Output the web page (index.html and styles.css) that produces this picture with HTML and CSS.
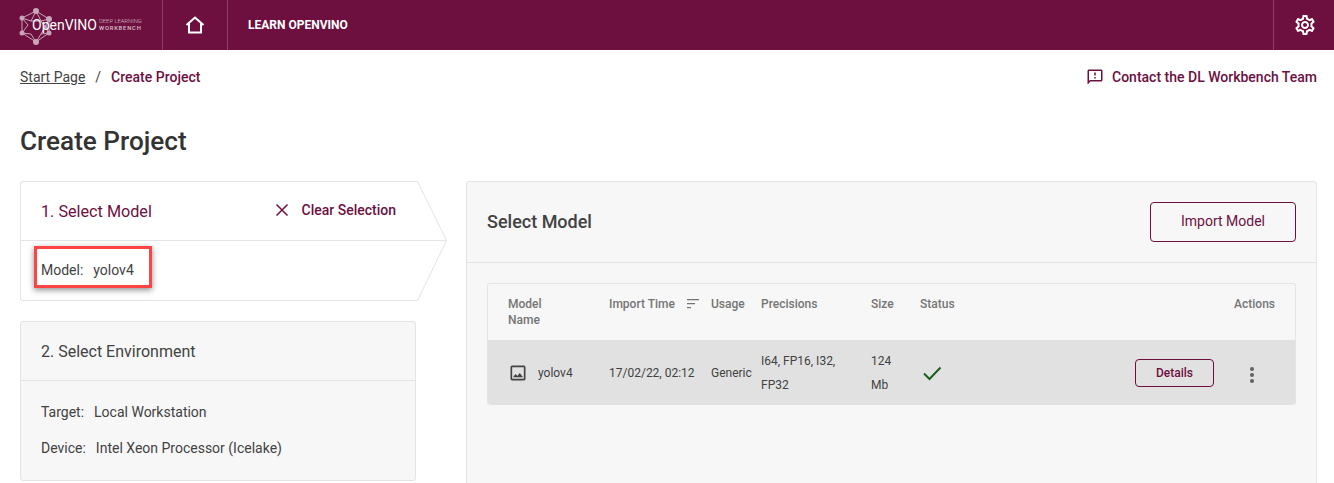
FILE: index.html
```html
<!DOCTYPE html>
<html lang="en">

<head>
    <meta charset="UTF-8">
    <meta name="viewport" content="width=device-width, initial-scale=1.0">
    <title>Create Project</title>
    <link rel="stylesheet" href="styles.css">
</head>

<body>
    <header class="topbar">
        <div class="logo">
            <svg class="logo-net" width="40" height="44" viewBox="0 0 40 44" fill="none" stroke="#c9a5b8" stroke-width="1">
                <path d="M17 9 L3 16 L3 31 L17 40 L30 31 L30 17 Z M3 16 L12 19 L17 9 L22 19 L30 17 M12 19 H22 M3 31 L9 23 L3 16 M17 40 L12 32 L3 31 M17 40 L22 32 L30 31 M22 19 L26 25 L22 32 M30 17 L26 25 L30 31" />
                <g fill="#c9a5b8" stroke="none">
                    <circle cx="17" cy="9" r="3" />
                    <circle cx="3" cy="16" r="2.5" />
                    <circle cx="30" cy="17" r="3" />
                    <circle cx="3" cy="31" r="2.5" />
                    <circle cx="30" cy="31" r="2.5" />
                    <circle cx="17" cy="40" r="3" />
                    <circle cx="26" cy="25" r="2" />
                </g>
            </svg>
            <span class="logo-name">OpenVINO</span>
            <span class="logo-sub">
                <span class="logo-sub-top">DEEP LEARNING</span>
                <span class="logo-sub-bottom">WORKBENCH</span>
            </span>
        </div>
        <a class="home-link">
            <svg width="20" height="18" viewBox="0 0 20 18" fill="none" stroke="#fff" stroke-width="2">
                <path d="M1.5 9 L10 1.5 L18.5 9 M4 7 V16.5 H16 V7" />
            </svg>
        </a>
        <a class="learn-link">LEARN OPENVINO</a>
        <a class="settings-link">
            <svg width="24" height="24" viewBox="0 0 24 24" fill="#fff">
                <path d="M19.43 12.98c.04-.32.07-.64.07-.98s-.03-.66-.07-.98l2.11-1.65c.19-.15.24-.42.12-.64l-2-3.46c-.12-.22-.39-.3-.61-.22l-2.49 1c-.52-.4-1.08-.73-1.69-.98l-.38-2.65C14.46 2.18 14.25 2 14 2h-4c-.25 0-.46.18-.49.42l-.38 2.65c-.61.25-1.17.59-1.69.98l-2.49-1c-.23-.09-.49 0-.61.22l-2 3.46c-.13.22-.07.49.12.64l2.11 1.65c-.04.32-.07.65-.07.98s.03.66.07.98l-2.11 1.65c-.19.15-.24.42-.12.64l2 3.46c.12.22.39.3.61.22l2.49-1c.52.4 1.08.73 1.69.98l.38 2.65c.03.24.24.42.49.42h4c.25 0 .46-.18.49-.42l.38-2.65c.61-.25 1.17-.59 1.69-.98l2.49 1c.23.09.49 0 .61-.22l2-3.46c.12-.22.07-.49-.12-.64l-2.11-1.65zM17.45 11.27c.04.31.05.52.05.73s-.02.43-.05.73l-.14 1.13.89.7 1.08.84-.7 1.21-1.27-.51-1.04-.42-.9.68c-.43.32-.84.56-1.25.73l-1.06.43-.16 1.13-.2 1.35h-1.4l-.19-1.35-.16-1.13-1.06-.43c-.43-.18-.83-.41-1.23-.71l-.91-.7-1.06.43-1.27.51-.7-1.21 1.08-.84.89-.7-.14-1.13c-.03-.31-.05-.54-.05-.74s.02-.43.05-.73l.14-1.13-.89-.7-1.08-.84.7-1.21 1.27.51 1.04.42.9-.68c.43-.32.84-.56 1.25-.73l1.06-.43.16-1.13.2-1.35h1.39l.19 1.35.16 1.13 1.06.43c.43.18.83.41 1.23.71l.91.7 1.06-.43 1.27-.51.7 1.21-1.07.85-.89.7.14 1.13zM12 8c-2.21 0-4 1.79-4 4s1.79 4 4 4 4-1.79 4-4-1.79-4-4-4zm0 6c-1.1 0-2-.9-2-2s.9-2 2-2 2 .9 2 2-.9 2-2 2z" />
            </svg>
        </a>
    </header>

    <main class="page">
        <div class="crumbs-row">
            <nav class="crumbs">
                <a class="crumb-link">Start Page</a>
                <span class="crumb-sep">/</span>
                <span class="crumb-current">Create Project</span>
            </nav>
            <a class="contact">
                <svg width="18" height="18" viewBox="0 0 24 24" fill="#6d103f">
                    <path d="M20 2H4c-1.1 0-2 .9-2 2v18l4-4h14c1.1 0 2-.9 2-2V4c0-1.1-.9-2-2-2zm0 14H5.17L4 17.17V4h16v12zM11 12h2v2h-2zm0-6h2v4h-2z" />
                </svg>
                Contact the DL Workbench Team
            </a>
        </div>

        <h1 class="title">Create Project</h1>

        <div class="columns">
            <div class="steps">
                <section class="step step-active">
                    <svg class="step-arrow" width="32" height="120" viewBox="0 0 32 120" fill="#fff" stroke="#e4e4e4">
                        <path d="M0 .5 L1.5 .5 L30.5 59.5 L1.5 119.5 L0 119.5" />
                        <path d="M0 59.5 H30.5" fill="none" />
                    </svg>
                    <div class="step-head">
                        <h2 class="step-title">1. Select Model</h2>
                        <a class="clear">
                            <svg width="14" height="14" viewBox="0 0 14 14" stroke="#6d103f" stroke-width="1.5">
                                <path d="M1.5 1.5 L12.5 12.5 M12.5 1.5 L1.5 12.5" />
                            </svg>
                            Clear Selection
                        </a>
                    </div>
                    <div class="step-body">
                        <p class="step-line"><span class="label">Model:</span>yolov4</p>
                    </div>
                    <div class="highlight"></div>
                </section>

                <section class="step">
                    <div class="step-head">
                        <h2 class="step-title step-title-plain">2. Select Environment</h2>
                    </div>
                    <div class="step-body step-body-env">
                        <p class="step-line"><span class="label">Target:</span>Local Workstation</p>
                        <p class="step-line"><span class="label">Device:</span>Intel Xeon Processor (Icelake)</p>
                    </div>
                </section>
            </div>

            <section class="panel">
                <div class="panel-head">
                    <h2 class="panel-title">Select Model</h2>
                    <button class="btn btn-large">Import Model</button>
                </div>
                <div class="panel-body">
                    <div class="table">
                        <div class="row row-head">
                            <div class="cell">Model<br>Name</div>
                            <div class="cell cell-sort">Import Time
                                <svg width="12" height="10" viewBox="0 0 12 10" fill="#757575">
                                    <path d="M0 0h12v1.2H0zM0 4h8v1.2H0zM0 8h4v1.2H0z" />
                                </svg>
                            </div>
                            <div class="cell">Usage</div>
                            <div class="cell">Precisions</div>
                            <div class="cell">Size</div>
                            <div class="cell">Status</div>
                            <div class="cell cell-actions">Actions</div>
                        </div>
                        <div class="row row-item">
                            <div class="cell cell-name">
                                <svg width="20" height="20" viewBox="0 0 24 24" fill="#424242">
                                    <path d="M19 5v14H5V5h14m0-2H5c-1.1 0-2 .9-2 2v14c0 1.1.9 2 2 2h14c1.1 0 2-.9 2-2V5c0-1.1-.9-2-2-2zM14.14 11.86l-3 3.87L9 13.14 6 17h12l-3.86-5.14z" />
                                </svg>
                                yolov4
                            </div>
                            <div class="cell">17/02/22, 02:12</div>
                            <div class="cell">Generic</div>
                            <div class="cell cell-wrap">I64, FP16, I32,<br>FP32</div>
                            <div class="cell cell-wrap">124<br>Mb</div>
                            <div class="cell cell-status">
                                <svg width="20" height="16" viewBox="0 0 20 16" fill="none" stroke="#1b5e20" stroke-width="2">
                                    <path d="M2 8.5 L7.5 14 L18.5 2.5" />
                                </svg>
                            </div>
                            <div class="cell cell-buttons">
                                <button class="btn btn-small">Details</button>
                                <svg class="kebab" width="6" height="18" viewBox="0 0 6 18" fill="#616161">
                                    <circle cx="3" cy="3" r="2" />
                                    <circle cx="3" cy="9" r="2" />
                                    <circle cx="3" cy="15" r="2" />
                                </svg>
                            </div>
                        </div>
                    </div>
                </div>
            </section>
        </div>
    </main>
</body>

</html>
```

FILE: styles.css
```css
* {
    box-sizing: border-box;
}

html,
body {
    height: 483px;
    overflow: hidden;
}

body {
    margin: 0;
    font-family: Roboto, "Liberation Sans", sans-serif;
    font-size: 14px;
    color: #424242;
    background-color: #fff;
}

h1,
h2,
p {
    margin: 0;
}

/* top bar */
.topbar {
    display: flex;
    align-items: stretch;
    height: 50px;
    background-color: #6d103f;
    color: #fff;
}

.logo {
    position: relative;
    display: flex;
    align-items: center;
    width: 163px;
    padding-left: 20px;
    border-right: 1px solid #8c3f66;
}

.logo-net {
    position: absolute;
    left: 19px;
    top: 2px;
}

.logo-name {
    position: relative;
    margin-left: 12px;
    font-size: 14px;
    font-weight: 400;
    color: #fff;
}

.logo-sub {
    display: flex;
    flex-direction: column;
    margin-left: 2px;
    color: #d9c3cf;
    line-height: 7px;
    white-space: nowrap;
}

.logo-sub-top {
    font-size: 5.8px;
    font-weight: 300;
}

.logo-sub-bottom {
    font-size: 5.8px;
    font-weight: 500;
    letter-spacing: 0.8px;
}

.home-link {
    display: flex;
    align-items: center;
    justify-content: center;
    width: 65px;
    border-right: 1px solid #8c3f66;
}

.learn-link {
    display: flex;
    align-items: center;
    padding-left: 20px;
    font-size: 12px;
    font-weight: 700;
}

.settings-link {
    display: flex;
    align-items: center;
    justify-content: center;
    width: 61px;
    padding-left: 2px;
    margin-left: auto;
    border-left: 1px solid #8c3f66;
}

/* page */
.page {
    padding: 0 17px 0 20px;
}

.crumbs-row {
    display: flex;
    align-items: center;
    justify-content: space-between;
    height: 54px;
}

.crumbs {
    display: flex;
    gap: 10px;
}

.crumb-link {
    text-decoration: underline;
    color: #424242;
}

.crumb-current {
    font-weight: 500;
    color: #6d103f;
}

.contact {
    display: flex;
    align-items: center;
    gap: 8px;
    font-weight: 500;
    color: #6d103f;
}

.title {
    margin-top: 21px;
    font-size: 26.15px;
    line-height: 32px;
    font-weight: 500;
    color: #333;
}

.columns {
    display: flex;
    gap: 50px;
    margin-top: 24px;
}

/* steps on the left */
.steps {
    display: flex;
    flex-direction: column;
    gap: 20px;
    flex: 0 0 396px;
}

.step {
    position: relative;
    height: 160px;
    background-color: #f7f7f7;
    border: 1px solid #e4e4e4;
    border-radius: 3px;
}

.step-active {
    height: 120px;
    background-color: #fff;
    border-right: none;
    border-radius: 3px 0 0 3px;
}

.step-arrow {
    position: absolute;
    left: 395px;
    top: -1px;
}

.step-head {
    display: flex;
    align-items: center;
    justify-content: space-between;
    height: 59px;
    padding: 0 20px;
    border-bottom: 1px solid #e4e4e4;
}

.step-title {
    font-size: 16.2px;
    font-weight: 400;
    color: #6d103f;
}

.step-title-plain {
    font-size: 16px;
    color: #424242;
}

.clear {
    display: flex;
    align-items: center;
    gap: 13px;
    margin-bottom: 2px;
    font-weight: 500;
    color: #6d103f;
}

.step-body {
    padding: 21px 20px;
}

.step-body-env {
    display: flex;
    flex-direction: column;
    gap: 20px;
    padding-top: 23px;
}

.step-line {
    line-height: 16px;
}

.label {
    margin-right: 10px;
}

.highlight {
    position: absolute;
    left: 13px;
    top: 64px;
    width: 118px;
    height: 42px;
    border: 3px solid #ff4444;
    box-shadow: 0 2px 6px rgba(0, 0, 0, 0.45);
}

/* right panel */
.panel {
    flex: 1;
    height: 320px;
    background-color: #f7f7f7;
    border: 1px solid #e4e4e4;
    border-radius: 3px;
}

.panel-head {
    display: flex;
    align-items: center;
    justify-content: space-between;
    height: 81px;
    padding: 0 20px 1px;
    border-bottom: 1px solid #e4e4e4;
}

.panel-title {
    font-size: 18px;
    font-weight: 500;
    color: #424242;
}

.btn {
    background-color: transparent;
    border: 1px solid #6d103f;
    border-radius: 4px;
    font-family: inherit;
    color: #6d103f;
}

.btn-large {
    width: 146px;
    height: 40px;
    padding-bottom: 3px;
    font-size: 14px;
}

.btn-small {
    width: 79px;
    height: 28px;
    font-size: 12px;
    font-weight: 500;
}

.panel-body {
    padding: 20px;
}

.table {
    border: 1px solid #e4e4e4;
    border-bottom: none;
    border-radius: 3px;
    overflow: hidden;
}

.row {
    display: grid;
    grid-template-columns: 101px 102px 50px 110px 49px 1fr auto;
    padding-left: 20px;
    font-size: 12px;
}

.row-head {
    height: 56px;
    padding-top: 12px;
    padding-right: 20px;
    font-weight: 500;
    line-height: 16px;
    color: #757575;
}

.row-item {
    align-items: center;
    height: 65px;
    padding-right: 40px;
    background-color: #e1e1e1;
    border-radius: 0 0 3px 3px;
}

.cell-sort {
    display: flex;
    align-items: flex-start;
    gap: 12px;
}

.cell-sort svg {
    margin-top: 3px;
}

.cell-name {
    display: flex;
    align-items: center;
    gap: 10px;
}

.cell-wrap {
    line-height: 24px;
}

.cell-status {
    display: flex;
    align-items: center;
    padding-left: 2px;
}

.cell-buttons {
    display: flex;
    align-items: center;
    gap: 35px;
}

.kebab {
    margin-top: 4px;
}
```
